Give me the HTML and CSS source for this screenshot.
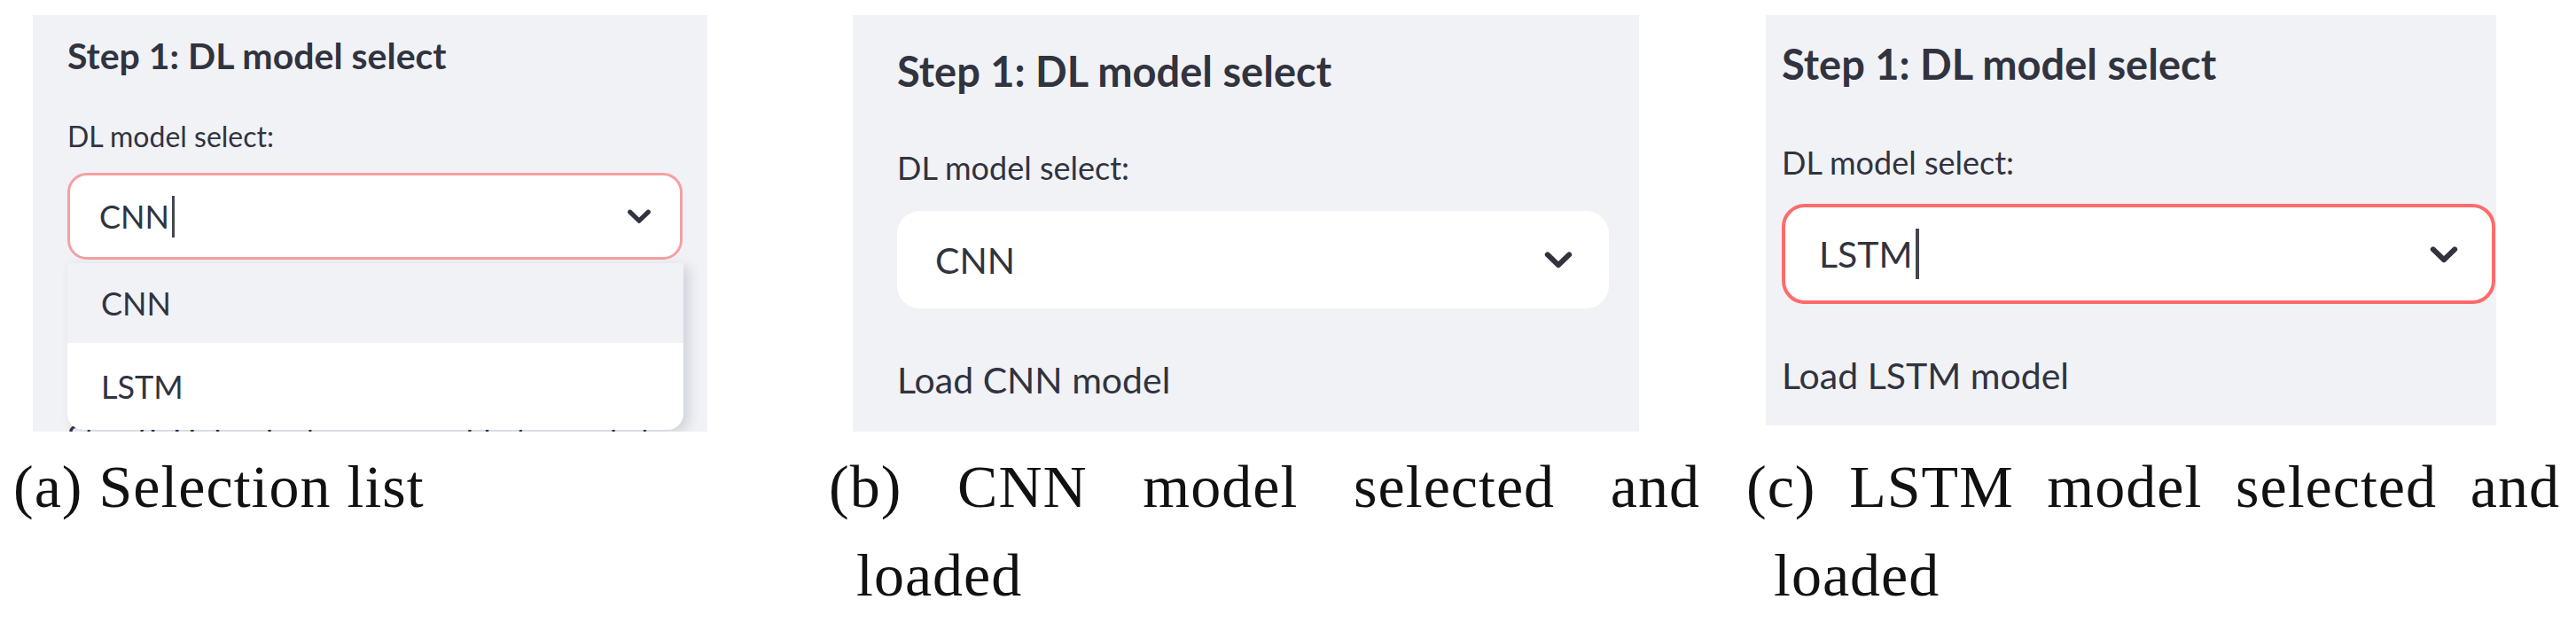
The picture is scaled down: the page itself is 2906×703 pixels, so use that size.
FILE: index.html
```html
<!DOCTYPE html>
<html lang="en">
<head>
    <meta charset="UTF-8">
    <title>DL model select</title>
    <link rel="stylesheet" href="styles.css">
</head>
<body>
    <div class="figs">
        <!-- (a) dropdown open -->
        <figure class="fig fig-a">
            <div class="shot">
                <div class="panel panel-a">
                    <h3 class="step">Step 1: DL model select</h3>
                    <div class="field-label">DL model select:</div>
                    <div class="select-box is-focus">
                        <span class="value">CNN</span><span class="caret"></span>
                        <svg class="chevron" viewBox="0 0 24 24"><polyline points="6.8,9.6 12,14.6 17.2,9.6"/></svg>
                    </div>
                    <p class="status status-hidden">Step 2: Upload a time series file to predict</p>
                    <ul class="menu">
                        <li class="menu-item is-hover">CNN</li>
                        <li class="menu-item">LSTM</li>
                    </ul>
                </div>
            </div>
            <figcaption class="caption">(a) Selection list</figcaption>
        </figure>

        <!-- (b) CNN chosen -->
        <figure class="fig fig-b">
            <div class="shot">
                <div class="panel panel-b">
                    <h3 class="step">Step 1: DL model select</h3>
                    <div class="field-label">DL model select:</div>
                    <div class="select-box">
                        <span class="value">CNN</span>
                        <svg class="chevron" viewBox="0 0 24 24"><polyline points="6.8,9.6 12,14.6 17.2,9.6"/></svg>
                    </div>
                    <p class="status">Load CNN model</p>
                </div>
            </div>
            <figcaption class="caption caption-wrap">(b) CNN model selected and<br>loaded</figcaption>
        </figure>

        <!-- (c) LSTM chosen -->
        <figure class="fig fig-c">
            <div class="shot">
                <div class="panel panel-c">
                    <h3 class="step">Step 1: DL model select</h3>
                    <div class="field-label">DL model select:</div>
                    <div class="select-box is-focus">
                        <span class="value">LSTM</span><span class="caret"></span>
                        <svg class="chevron" viewBox="0 0 24 24"><polyline points="6.8,9.6 12,14.6 17.2,9.6"/></svg>
                    </div>
                    <p class="status">Load LSTM model</p>
                </div>
            </div>
            <figcaption class="caption caption-wrap">(c) LSTM model selected and<br>loaded</figcaption>
        </figure>
    </div>
</body>
</html>
```

FILE: styles.css
```css
body {
    margin: 0;
    background: #fff;
    font-family: Lato, "Open Sans", sans-serif;
    color: #31333f;
}
.figs {
    display: flex;
    align-items: flex-start;
}
.fig {
    margin: 0;
    flex: none;
}
.fig-a { width: 905px; margin-left: 15px; }
.fig-b { width: 983px; margin-left: 15px; }
.fig-c { width: 918px; margin-left: 52px; }

.shot {
    height: 499px;
    padding-top: 17px;
    box-sizing: border-box;
}
.panel {
    position: relative;
    background: #f0f2f6;
    overflow: hidden;
    box-sizing: border-box;
}
.step {
    margin: 0;
    font-weight: 700;
}
.field-label {
    font-weight: 400;
}
.select-box {
    display: flex;
    align-items: center;
    background: #fff;
    box-sizing: border-box;
    border: 3px solid transparent;
}
.select-box .value {
    line-height: 1;
}
.caret {
    display: inline-block;
    width: 3px;
    background: #44464f;
    margin-left: 3px;
}
.chevron {
    margin-left: auto;
    fill: none;
    stroke: #31333f;
    stroke-width: 2.6;
    stroke-linecap: round;
    stroke-linejoin: round;
}
.status {
    margin: 0;
}

/* panel a, smaller scale */
.panel-a {
    width: 761px;
    height: 470px;
    margin-left: 22px;
    padding: 21px 28px 0 39px;
}
.panel-a .step { font-size: 41px; line-height: 49px; }
.panel-a .field-label { font-size: 32px; line-height: 38px; margin-top: 48px; }
.panel-a .select-box {
    height: 98px;
    margin-top: 22px;
    border-radius: 22px;
    border-color: #f6a0a0;
    padding: 0 22px 0 33px;
    font-size: 36px;
}
.panel-a .caret { height: 47px; }
.panel-a .chevron { width: 48px; height: 48px; }
.panel-a .status-hidden {
    font-size: 36px;
    line-height: 40px;
    margin-top: 179px;
    white-space: nowrap;
}
.menu {
    position: absolute;
    top: 280px;
    left: 39px;
    width: 695px;
    margin: 0;
    padding: 0;
    list-style: none;
    background: #fff;
    border-radius: 0 0 18px 18px;
    box-shadow: 6px 4px 14px rgba(40, 44, 60, 0.16);
    font-size: 36px;
    overflow: hidden;
}
.menu-item {
    height: 98px;
    display: flex;
    align-items: center;
    padding-left: 38px;
}
.menu-item.is-hover {
    height: 90px;
    background: #f0f2f6;
}

/* panels b and c, larger scale */
.panel-b, .panel-c {
    height: 470px;
}
.panel-b .step, .panel-c .step { font-size: 47px; line-height: 56px; }
.panel-b .field-label, .panel-c .field-label { font-size: 36px; line-height: 43px; }
.panel-b .select-box, .panel-c .select-box {
    font-size: 41px;
    border-radius: 26px;
}
.panel-b .chevron, .panel-c .chevron { width: 56px; height: 56px; }
.panel-b .status, .panel-c .status { font-size: 41px; line-height: 49px; margin-top: 56px; }

.panel-b {
    width: 887px;
    margin-left: 27px;
    padding: 35px 34px 0 50px;
}
.panel-b .field-label { margin-top: 60px; }
.panel-b .select-box {
    height: 110px;
    margin-top: 27px;
    border: 0;
    padding: 0 29px 0 43px;
}

.panel-c {
    width: 824px;
    height: 463px;
    margin-left: 22px;
    padding: 27px 1px 0 18px;
}
.panel-c .field-label { margin-top: 62px; }
.panel-c .select-box {
    height: 113px;
    margin-top: 25px;
    border: 4px solid #ff6b6b;
    padding: 0 26px 0 38px;
}
.panel-c .caret { height: 57px; width: 4px; }

/* captions */
.caption {
    font-family: "Liberation Serif", "Times New Roman", serif;
    font-size: 68px;
    line-height: 100px;
    letter-spacing: 1px;
    color: #111;
    white-space: nowrap;
}
.caption-wrap {
    white-space: normal;
    text-align: justify;
    text-align-last: justify;
    padding-left: 31px;
    text-indent: -31px;
}
```
